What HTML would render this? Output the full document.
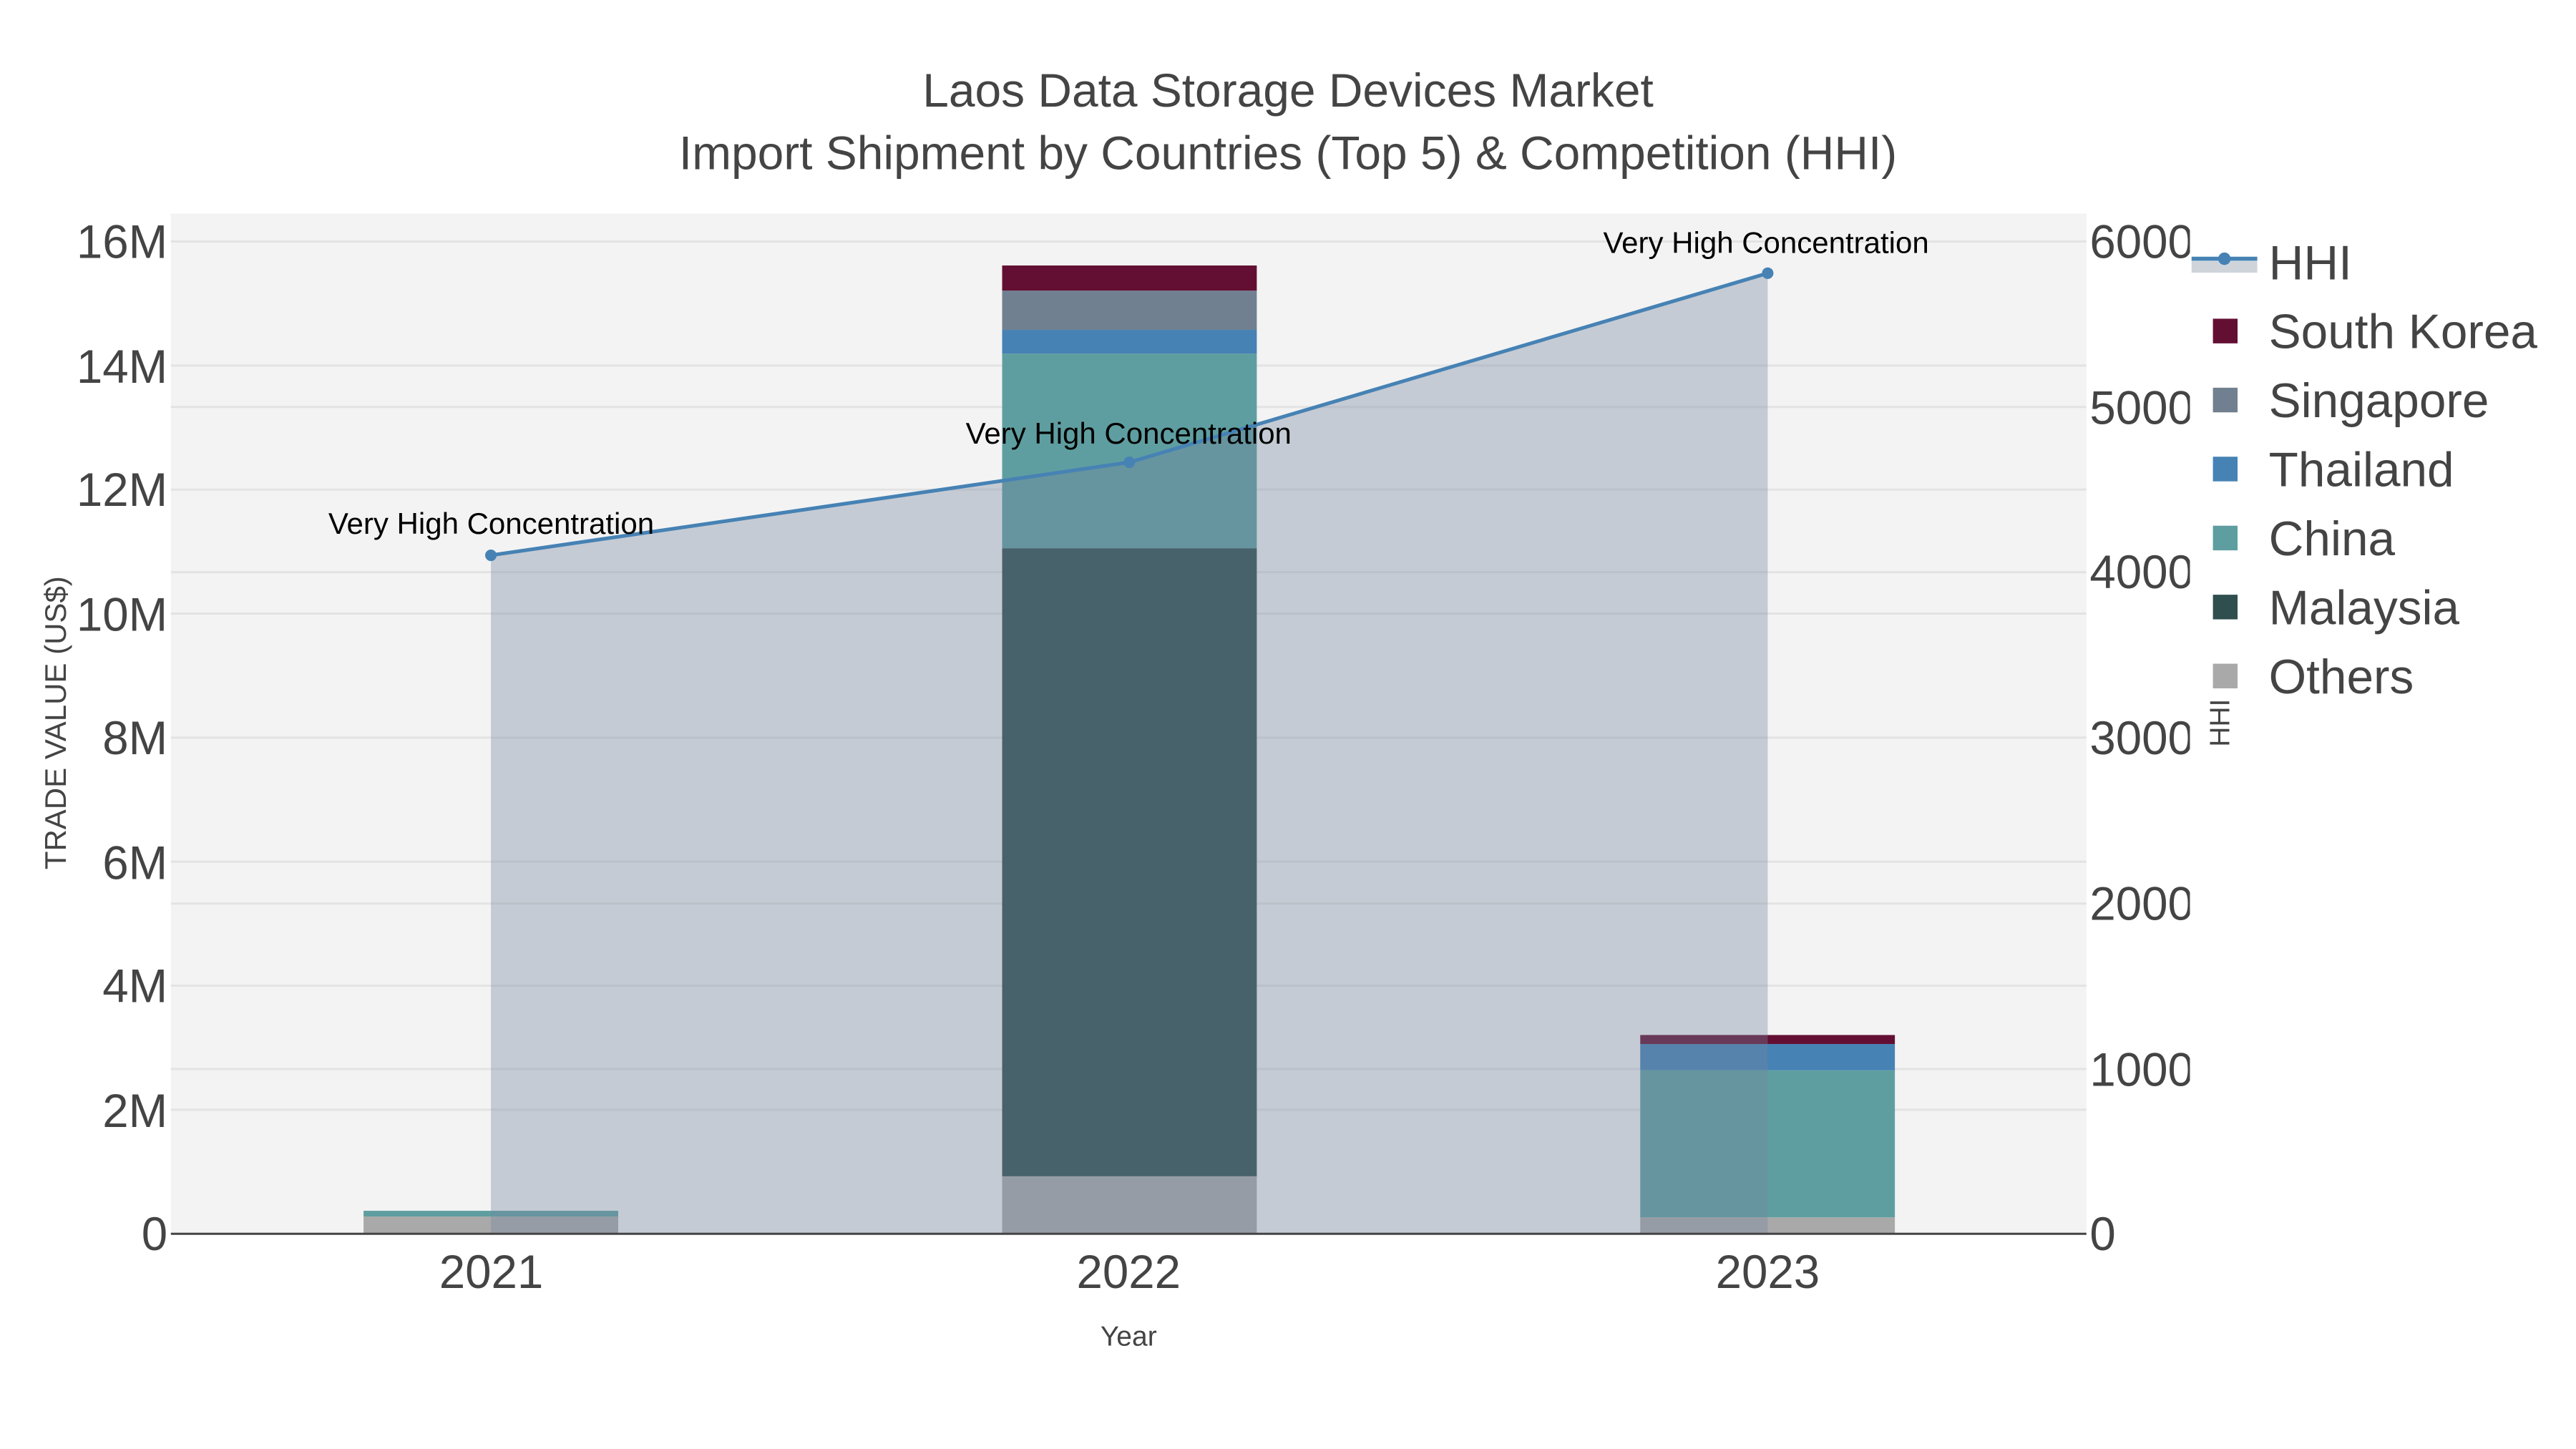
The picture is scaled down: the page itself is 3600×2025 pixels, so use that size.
<!DOCTYPE html>
<html><head><meta charset="utf-8"><style>
html,body{margin:0;padding:0;background:#fff;}
svg{display:block;}
text{font-family:"Liberation Sans",sans-serif;}
</style></head><body>
<svg width="3600" height="2025" viewBox="0 0 1568 882" xmlns="http://www.w3.org/2000/svg">
<defs><clipPath id="rc"><rect x="1268" y="100" width="65" height="700"/></clipPath></defs>
<rect x="0" y="0" width="1568" height="882" fill="#fff"/>
<rect x="104" y="130" width="1166" height="621" fill="#f3f3f3"/>
<g stroke="#e3e3e3" stroke-width="1.3">
<line x1="104" x2="1270" y1="147" y2="147"/>
<line x1="104" x2="1270" y1="222.5" y2="222.5"/>
<line x1="104" x2="1270" y1="298" y2="298"/>
<line x1="104" x2="1270" y1="373.5" y2="373.5"/>
<line x1="104" x2="1270" y1="449" y2="449"/>
<line x1="104" x2="1270" y1="524.5" y2="524.5"/>
<line x1="104" x2="1270" y1="600" y2="600"/>
<line x1="104" x2="1270" y1="675.5" y2="675.5"/>
<line x1="104" x2="1270" y1="247.7" y2="247.7"/>
<line x1="104" x2="1270" y1="348.3" y2="348.3"/>
<line x1="104" x2="1270" y1="550" y2="550"/>
<line x1="104" x2="1270" y1="650.7" y2="650.7"/>
</g>
<rect x="221.3" y="740.5" width="155" height="10.5" fill="#a9a9a9"/>
<rect x="221.3" y="737" width="155" height="3.5" fill="#5f9ea0"/>
<rect x="610" y="716" width="155" height="35" fill="#a9a9a9"/>
<rect x="610" y="333.7" width="155" height="382.3" fill="#2f4f4f"/>
<rect x="610" y="215.2" width="155" height="118.5" fill="#5f9ea0"/>
<rect x="610" y="200.8" width="155" height="14.4" fill="#4682b4"/>
<rect x="610" y="176.9" width="155" height="23.9" fill="#708090"/>
<rect x="610" y="161.6" width="155" height="15.3" fill="#630f33"/>
<rect x="998.4" y="741" width="155" height="10" fill="#a9a9a9"/>
<rect x="998.4" y="651.5" width="155" height="89.5" fill="#5f9ea0"/>
<rect x="998.4" y="635.5" width="155" height="16" fill="#4682b4"/>
<rect x="998.4" y="630" width="155" height="5.5" fill="#630f33"/>
<polygon points="298.8,338 687.4,281.4 1076,166.3 1076,751 298.8,751" fill="rgb(116,134,157)" fill-opacity="0.36"/>
<polyline points="298.8,338 687.4,281.4 1076,166.3" fill="none" stroke="#4682b4" stroke-width="2.2"/>
<circle cx="298.8" cy="338" r="3.5" fill="#4682b4"/>
<circle cx="687.4" cy="281.4" r="3.5" fill="#4682b4"/>
<circle cx="1076" cy="166.3" r="3.5" fill="#4682b4"/>
<line x1="104" x2="1270" y1="751" y2="751" stroke="#444" stroke-width="1.3"/>
<g font-size="18.3" fill="#000" text-anchor="middle">
<text x="299" y="325">Very High Concentration</text>
<text x="687" y="270">Very High Concentration</text>
<text x="1075" y="154">Very High Concentration</text>
</g>
<g font-size="28.7" fill="#444" text-anchor="middle">
<text x="784" y="65">Laos Data Storage Devices Market</text>
<text x="784" y="103">Import Shipment by Countries (Top 5) &amp; Competition (HHI)</text>
</g>
<g font-size="28.5" fill="#444" text-anchor="end">
<text x="102" y="157">16M</text>
<text x="102" y="233">14M</text>
<text x="102" y="308">12M</text>
<text x="102" y="384">10M</text>
<text x="102" y="459">8M</text>
<text x="102" y="535">6M</text>
<text x="102" y="610">4M</text>
<text x="102" y="686">2M</text>
<text x="102" y="761">0</text>
</g>
<g font-size="28.5" fill="#444" clip-path="url(#rc)">
<text x="1272" y="157">6000</text>
<text x="1272" y="258">5000</text>
<text x="1272" y="358">4000</text>
<text x="1272" y="459">3000</text>
<text x="1272" y="560">2000</text>
<text x="1272" y="661">1000</text>
<text x="1272" y="761">0</text>
</g>
<g font-size="28.5" fill="#444" text-anchor="middle">
<text x="299" y="784">2021</text>
<text x="687" y="784">2022</text>
<text x="1076" y="784">2023</text>
</g>
<text x="687" y="819" font-size="17" fill="#444" text-anchor="middle">Year</text>
<text transform="translate(40,440) rotate(-90)" font-size="18.3" fill="#444" text-anchor="middle">TRADE VALUE (US$)</text>
<text transform="translate(1357,440) rotate(-90)" font-size="17" fill="#444" text-anchor="middle">HHI</text>
<rect x="1334" y="159" width="40" height="7" fill="#cfd4db"/>
<line x1="1334" x2="1374" y1="157.5" y2="157.5" stroke="#4682b4" stroke-width="2.5"/>
<circle cx="1354" cy="157.5" r="3.8" fill="#4682b4"/>
<g fill="#444" font-size="29.4">
<text x="1381" y="170">HHI</text>
<text x="1381" y="212">South Korea</text>
<text x="1381" y="254">Singapore</text>
<text x="1381" y="296">Thailand</text>
<text x="1381" y="338">China</text>
<text x="1381" y="380">Malaysia</text>
<text x="1381" y="422">Others</text>
</g>
<rect x="1347" y="194" width="15" height="15" fill="#630f33"/>
<rect x="1347" y="236" width="15" height="15" fill="#708090"/>
<rect x="1347" y="278" width="15" height="15" fill="#4682b4"/>
<rect x="1347" y="320" width="15" height="15" fill="#5f9ea0"/>
<rect x="1347" y="362" width="15" height="15" fill="#2f4f4f"/>
<rect x="1347" y="404" width="15" height="15" fill="#a9a9a9"/>
</svg>
</body></html>
